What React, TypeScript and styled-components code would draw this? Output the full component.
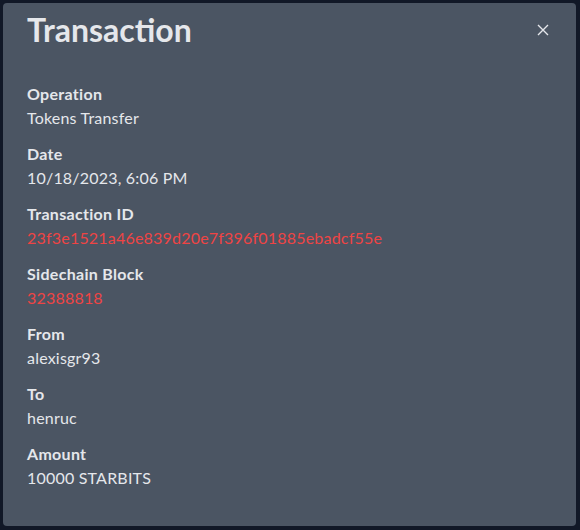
import React from "react";
import styled, { createGlobalStyle } from "styled-components";

const GlobalStyle = createGlobalStyle`
  html, body {
    margin: 0;
    padding: 0;
    background: #111827;
    font-family: "Lato", "Noto Sans", sans-serif;
  }
`;

const Backdrop = styled.div`
  width: 580px;
  height: 530px;
  box-sizing: border-box;
  padding: 3px 4px 4px 3px;
  background: #111827;
`;

const Modal = styled.div`
  height: 100%;
  box-sizing: border-box;
  background: #4b5563;
  border-radius: 4px;
  padding: 10px 24px 24px 24px;
  color: #e5e7eb;
`;

const Header = styled.div`
  display: flex;
  align-items: center;
  justify-content: space-between;
  margin-bottom: 35px;
`;

const Title = styled.h2`
  margin: 0;
  font-size: 32px;
  font-weight: 700;
  line-height: 34px;
  color: #e5e7eb;
`;

const CloseButton = styled.button`
  background: none;
  border: none;
  padding: 0;
  margin-right: 3px;
  display: flex;
  color: #e5e7eb;
  cursor: pointer;
`;

const Fields = styled.dl`
  margin: 0;
  display: flex;
  flex-direction: column;
  gap: 12px;
`;

const Field = styled.div`
  display: flex;
  flex-direction: column;
`;

const Label = styled.dt`
  font-size: 16px;
  font-weight: 700;
  line-height: 24px;
  letter-spacing: 0.3px;
  color: #e5e7eb;
`;

const Value = styled.dd<{ $link?: boolean }>`
  margin: 0;
  font-size: 16px;
  line-height: 24px;
  letter-spacing: 0.2px;
  color: ${(p) => (p.$link ? "#ef4444" : "#e5e7eb")};
`;

const fields: { label: string; value: string; link?: boolean }[] = [
  { label: "Operation", value: "Tokens Transfer" },
  { label: "Date", value: "10/18/2023, 6:06 PM" },
  { label: "Transaction ID", value: "23f3e1521a46e839d20e7f396f01885ebadcf55e", link: true },
  { label: "Sidechain Block", value: "32388818", link: true },
  { label: "From", value: "alexisgr93" },
  { label: "To", value: "henruc" },
  { label: "Amount", value: "10000 STARBITS" },
];

export default function App() {
  return (
    <>
      <GlobalStyle />
      <Backdrop>
        <Modal>
          <Header>
            <Title>Transaction</Title>
            <CloseButton aria-label="Close">
              <svg width="12" height="12" viewBox="0 0 12 12" fill="none" stroke="currentColor" strokeWidth="1.4">
                <path d="M1 1L11 11M11 1L1 11" />
              </svg>
            </CloseButton>
          </Header>
          <Fields>
            {fields.map((f) => (
              <Field key={f.label}>
                <Label>{f.label}</Label>
                <Value $link={f.link}>{f.value}</Value>
              </Field>
            ))}
          </Fields>
        </Modal>
      </Backdrop>
    </>
  );
}
